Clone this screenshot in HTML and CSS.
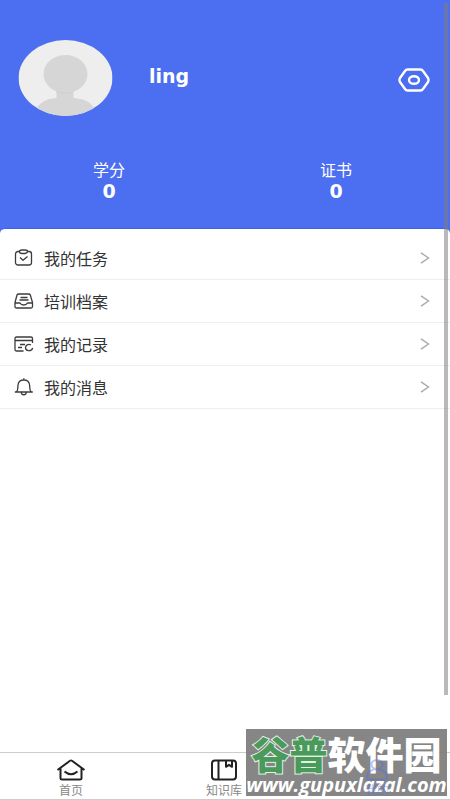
FILE: index.html
```html
<!DOCTYPE html>
<html lang="zh-CN">
<head>
<meta charset="utf-8">
<meta name="viewport" content="width=device-width, initial-scale=1">
<title>我的</title>
<link rel="stylesheet" href="styles.css">
</head>
<body>
<header class="hero">
  <div class="profile">
    <svg class="avatar" viewBox="0 0 94 76" role="img" aria-label="头像">
      <defs><clipPath id="face"><ellipse cx="47" cy="38" rx="47" ry="38"/></clipPath></defs>
      <g clip-path="url(#face)">
        <path fill="#eee" d="M0 0h94v76H0z"/>
        <path fill="#d6d6d6" d="M38 48h17v10c10 1 21 3 23 18H16c2-14 12-17 22-18z"/>
        <path fill="#cbcbcb" d="M38 50h17v2q-8 3-17 0z"/>
        <ellipse cx="47" cy="34" rx="22" ry="19" fill="#d6d6d6"/>
      </g>
    </svg>
    <h1 class="name">ling</h1>
    <button class="settings" type="button" aria-label="设置">
      <svg viewBox="0 0 32 24" fill="none" stroke="#fff" stroke-width="2.4" stroke-linejoin="round">
        <path d="M9.500 1.500h13q1.500 0 2.500 1.500l5 7q1 2 0 4l-5 7q-1 1.500-2.500 1.500h-13Q8 22.500 7 21l-5-7q-1-2 0-4l5-7Q8 1.500 9.500 1.500z"/>
        <ellipse cx="16" cy="12" rx="5" ry="3.800"/>
      </svg>
    </button>
  </div>
  <dl class="stats">
    <div class="stat"><dt>学分</dt><dd>0</dd></div>
    <div class="stat"><dt>证书</dt><dd>0</dd></div>
  </dl>
</header>
<main class="panel">
  <nav class="menu">
    <a class="row" href="#tasks">
      <svg class="icon" viewBox="0 0 20 18"><rect x="1.500" y="2.500" width="16" height="13.500" rx="2.500"/><path class="cover" d="M5.500 2.500Q5.500 1 8 1h3q2.500 0 2.500 1.500T11 4.500H8Q5.500 4.500 5.500 2.500z"/><path d="M6 8.500l3 2.800 4.500-3.800"/></svg>
      <span class="label">我的任务</span>
      <svg class="arrow" viewBox="0 0 10 12"><path d="M1 .8L8.500 6 1 11.200"/></svg>
    </a>
    <a class="row" href="#files">
      <svg class="icon" viewBox="0 0 20 18"><path d="M1 10.500L3 3Q3.300 2 5 2h9.500q1.500 0 1.800 1L18.500 10.500v4q0 1.500-1.500 1.500H2.500Q1 16 1 14.500zM1 11h5q1 2 3.700 2t3.700-2h5M6.500 5.500h7M5.500 8h9"/></svg>
      <span class="label">培训档案</span>
      <svg class="arrow" viewBox="0 0 10 12"><path d="M1 .8L8.500 6 1 11.200"/></svg>
    </a>
    <a class="row" href="#records">
      <svg class="icon" viewBox="0 0 20 18"><path d="M9.500 16H2.500Q1 16 1 14.500v-11Q1 2 2.500 2h14.500Q18.500 2 18.500 3.500V8M1 5.500h17.500M6 9.500H11M4 12.500H8M17 10c-3-1.500-5.500.3-5.500 2.700 0 3.300 5.800 4.500 7.200.3"/></svg>
      <span class="label">我的记录</span>
      <svg class="arrow" viewBox="0 0 10 12"><path d="M1 .8L8.500 6 1 11.200"/></svg>
    </a>
    <a class="row" href="#messages">
      <svg class="icon" viewBox="0 0 20 18"><path d="M.8 14h18M2.500 14C4.300 12 3.700 9.500 4 7 4.300 4 6.500 2 9.800 2s5.500 2 5.800 5c.3 2.500-.3 5 1.500 7M9.800 2V.3M7.300 14.500c.3 3 4.700 3 5 0"/></svg>
      <span class="label">我的消息</span>
      <svg class="arrow" viewBox="0 0 10 12"><path d="M1 .8L8.500 6 1 11.200"/></svg>
    </a>
  </nav>
</main>
<nav class="tabs">
  <a class="tab" href="#home">
    <svg viewBox="0 0 30 22"><path d="M1.500 11L14 1.800q1-.7 2 0L28.500 11M4.500 9.500v10q0 1 1.500 1h18q1.500 0 1.500-1v-10M8.500 12.500q6.500 5.500 13 0"/></svg>
    <span>首页</span>
  </a>
  <a class="tab" href="#library">
    <svg viewBox="0 0 30 22"><rect x="3" y="1.500" width="24" height="19" rx="3"/><path d="M9.500 1.500v19M17 1.500v6.300l3-2 3 2V1.500"/></svg>
    <span>知识库</span>
  </a>
  <a class="tab active" href="#mine">
    <svg viewBox="0 0 30 22"><ellipse cx="15" cy="5.500" rx="5.500" ry="4.500"/><path d="M5 18.500c0-5 4-8.500 10-8.500s10 3.500 10 8.500q0 2-2 2H7q-2 0-2-2z"/></svg>
    <span>我的</span>
  </a>
</nav>
<div class="scrollbar"></div>
<div class="watermark">
  <div class="brand"><span class="green">谷普</span>软件园</div>
  <div class="site">www.gupuxlazal.com</div>
</div>
</body>
</html>
```
FILE: styles.css
```css
* { box-sizing: border-box; }

body {
  position: relative;
  display: flex;
  flex-direction: column;
  min-height: 100vh;
  margin: 0;
  background: #fff;
  color: #333;
  font-family: "Noto Sans CJK SC", sans-serif;
}

a { color: inherit; text-decoration: none; }

.hero {
  padding: 40px 20px 32px 18px;
  background: #4c6ef0;
  color: #fff;
}

.profile {
  display: flex;
  align-items: center;
}

.avatar { width: 95px; height: 76px; }

.name {
  flex: 1;
  margin: 0 0 4px 36px;
  font: bold 19px/24px "DejaVu Sans", sans-serif;
}

.settings {
  padding: 0;
  border: 0;
  background: none;
}

.settings svg { display: block; width: 32px; height: 24px; margin-top: 4px; }

.stats {
  display: flex;
  justify-content: space-between;
  margin: 43px 0 0;
  padding: 0 78px 0 75px;
  text-align: center;
}

.stat dt { font-size: 16px; line-height: 20px; }

.stat dd {
  margin: 0;
  font: bold 19px/24px "DejaVu Sans", sans-serif;
}

.panel {
  flex: 1;
  margin-top: -7px;
  padding-top: 8px;
  border-top: 1px solid #3f60e4;
  border-radius: 5px 5px 0 0;
  background: #fff;
}

.row {
  display: flex;
  align-items: center;
  height: 43px;
  padding: 0 20px 0 14px;
  border-bottom: 1px solid #eee;
}

.icon {
  width: 20px;
  height: 18px;
  fill: none;
  stroke: #3c3c3c;
  stroke-width: 1.3;
  stroke-linejoin: round;
}

.icon .cover { fill: #fff; }

.label {
  flex: 1;
  margin-left: 10px;
  font-size: 16px;
  line-height: 24px;
}

.arrow {
  width: 10px;
  height: 12px;
  fill: none;
  stroke: #aaa;
  stroke-width: 1.4;
}

.tabs {
  display: flex;
  justify-content: space-between;
  height: 48px;
  padding: 6px 58px 0 56px;
  border-top: 1px solid #ccc;
  border-bottom: 1px solid #ccc;
}

.tab {
  display: flex;
  flex-direction: column;
  align-items: center;
  color: #888;
  font-size: 12px;
  line-height: 18px;
}

.tab svg {
  width: 30px;
  height: 22px;
  fill: none;
  stroke: #222;
  stroke-width: 2;
  stroke-linejoin: round;
}

.active {
  position: relative;
  z-index: 1;
  color: #4c6ef0;
  opacity: 0.4;
}

.active svg { stroke: #4c6ef0; }

.scrollbar {
  position: absolute;
  top: 3px;
  right: 2px;
  bottom: 105px;
  width: 4px;
  background: rgba(128, 128, 128, 0.55);
}

.watermark {
  position: absolute;
  right: 3px;
  bottom: 4px;
  width: 201px;
  height: 67px;
  padding-top: 3px;
  background: rgba(124, 124, 124, 0.92);
  color: #fff;
  text-align: center;
  white-space: nowrap;
}

.brand {
  font-size: 38px;
  font-weight: 900;
  line-height: 42px;
}

.green {
  color: #4a9a5c;
  -webkit-text-stroke: 2px #e4f2e6;
  paint-order: stroke fill;
}

.site {
  font: italic bold 20px/22px "Open Sans", sans-serif;
}
```
